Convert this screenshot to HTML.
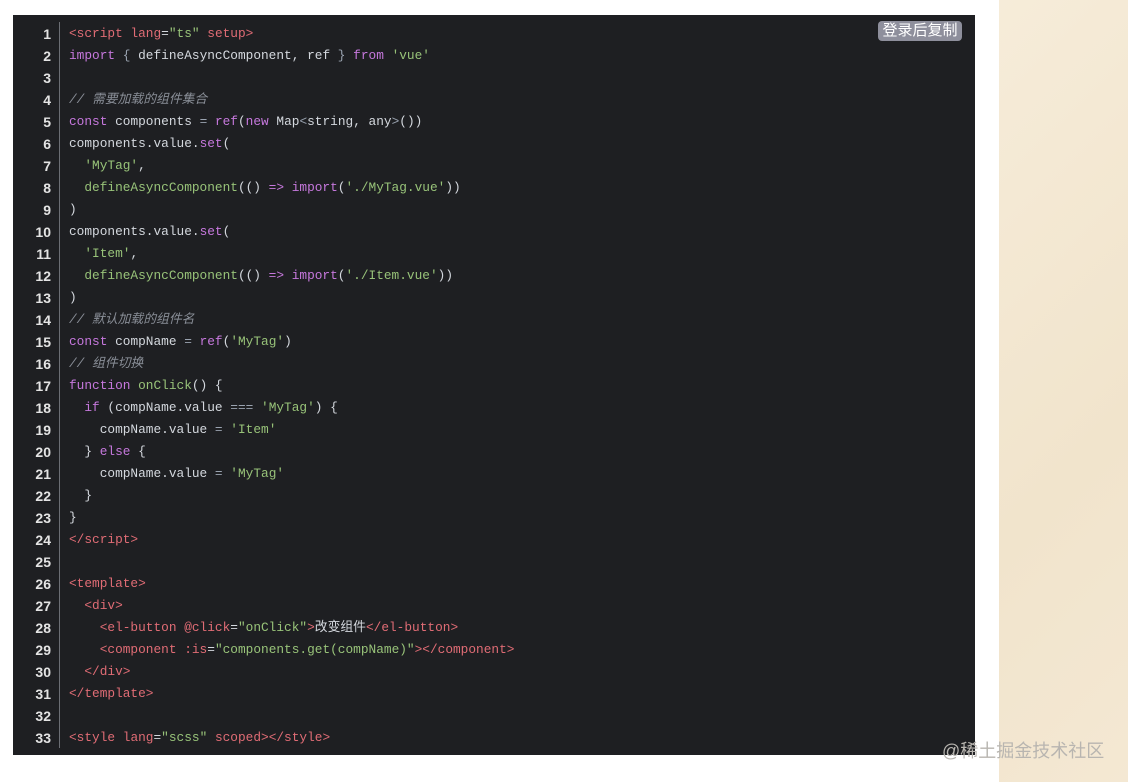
<!DOCTYPE html>
<html><head><meta charset="utf-8"><style>
body{margin:0;width:1128px;height:782px;background:#fff;position:relative;overflow:hidden;font-family:"Liberation Sans","Noto Sans CJK SC",sans-serif}
.side{position:absolute;left:999px;top:0;width:129px;height:782px;background:linear-gradient(135deg,#f6ecd9,#f1e4cc 60%,#f4e8d3)}
.code{position:absolute;left:13px;top:15px;width:962px;height:740px;background:#1e1f22}
.ln{position:absolute;left:0;top:8px;width:38px;text-align:right;color:#e4e4e4;font:bold 14px/22px "Liberation Sans",sans-serif}
.bar{position:absolute;left:46px;top:7px;width:1px;height:726px;background:#6b6e74}
pre{position:absolute;left:56px;top:8px;margin:0;font:12.8px/22px "Liberation Mono","Noto Sans CJK SC",monospace;color:#d4d8de}
.t{color:#e06c75}.k{color:#c678dd}.s{color:#98c379}.c{color:#8a8f98;font-style:italic}.o{color:#9aa3b0}
.btn{position:absolute;left:878px;top:21px;width:84px;height:20px;background:#8e8f9c;border-radius:4px;color:#fff;font-size:15px;line-height:20px;text-align:center}
.wm{position:absolute;left:942px;top:737px;color:#b8b5b0;font-size:18px}
</style></head><body>
<div class="side"></div>
<div class="code">
<div class="ln">1<br>2<br>3<br>4<br>5<br>6<br>7<br>8<br>9<br>10<br>11<br>12<br>13<br>14<br>15<br>16<br>17<br>18<br>19<br>20<br>21<br>22<br>23<br>24<br>25<br>26<br>27<br>28<br>29<br>30<br>31<br>32<br>33</div>
<div class="bar"></div>
<pre><span class="t">&lt;script</span> <span class="t">lang</span>=<span class="s">"ts"</span> <span class="t">setup&gt;</span>
<span class="k">import</span> <span class="o">{</span> defineAsyncComponent, ref <span class="o">}</span> <span class="k">from</span> <span class="s">'vue'</span>

<span class="c">// 需要加载的组件集合</span>
<span class="k">const</span> components <span class="o">=</span> <span class="k">ref</span>(<span class="k">new</span> Map<span class="o">&lt;</span>string, any<span class="o">&gt;</span>())
components.value.<span class="k">set</span>(
  <span class="s">'MyTag'</span>,
  <span class="s">defineAsyncComponent</span>(() <span class="k">=&gt;</span> <span class="k">import</span>(<span class="s">'./MyTag.vue'</span>))
)
components.value.<span class="k">set</span>(
  <span class="s">'Item'</span>,
  <span class="s">defineAsyncComponent</span>(() <span class="k">=&gt;</span> <span class="k">import</span>(<span class="s">'./Item.vue'</span>))
)
<span class="c">// 默认加载的组件名</span>
<span class="k">const</span> compName <span class="o">=</span> <span class="k">ref</span>(<span class="s">'MyTag'</span>)
<span class="c">// 组件切换</span>
<span class="k">function</span> <span class="s">onClick</span>() {
  <span class="k">if</span> (compName.value <span class="o">===</span> <span class="s">'MyTag'</span>) {
    compName.value <span class="o">=</span> <span class="s">'Item'</span>
  } <span class="k">else</span> {
    compName.value <span class="o">=</span> <span class="s">'MyTag'</span>
  }
}
<span class="t">&lt;/script&gt;</span>

<span class="t">&lt;template&gt;</span>
  <span class="t">&lt;div&gt;</span>
    <span class="t">&lt;el-button</span> <span class="t">@click</span>=<span class="s">"onClick"</span><span class="t">&gt;</span>改变组件<span class="t">&lt;/el-button&gt;</span>
    <span class="t">&lt;component</span> <span class="t">:is</span>=<span class="s">"components.get(compName)"</span><span class="t">&gt;&lt;/component&gt;</span>
  <span class="t">&lt;/div&gt;</span>
<span class="t">&lt;/template&gt;</span>

<span class="t">&lt;style</span> <span class="t">lang</span>=<span class="s">"scss"</span> <span class="t">scoped&gt;&lt;/style&gt;</span></pre>
</div>
<div class="btn">登录后复制</div>
<div class="wm">@稀土掘金技术社区</div>
</body></html>
